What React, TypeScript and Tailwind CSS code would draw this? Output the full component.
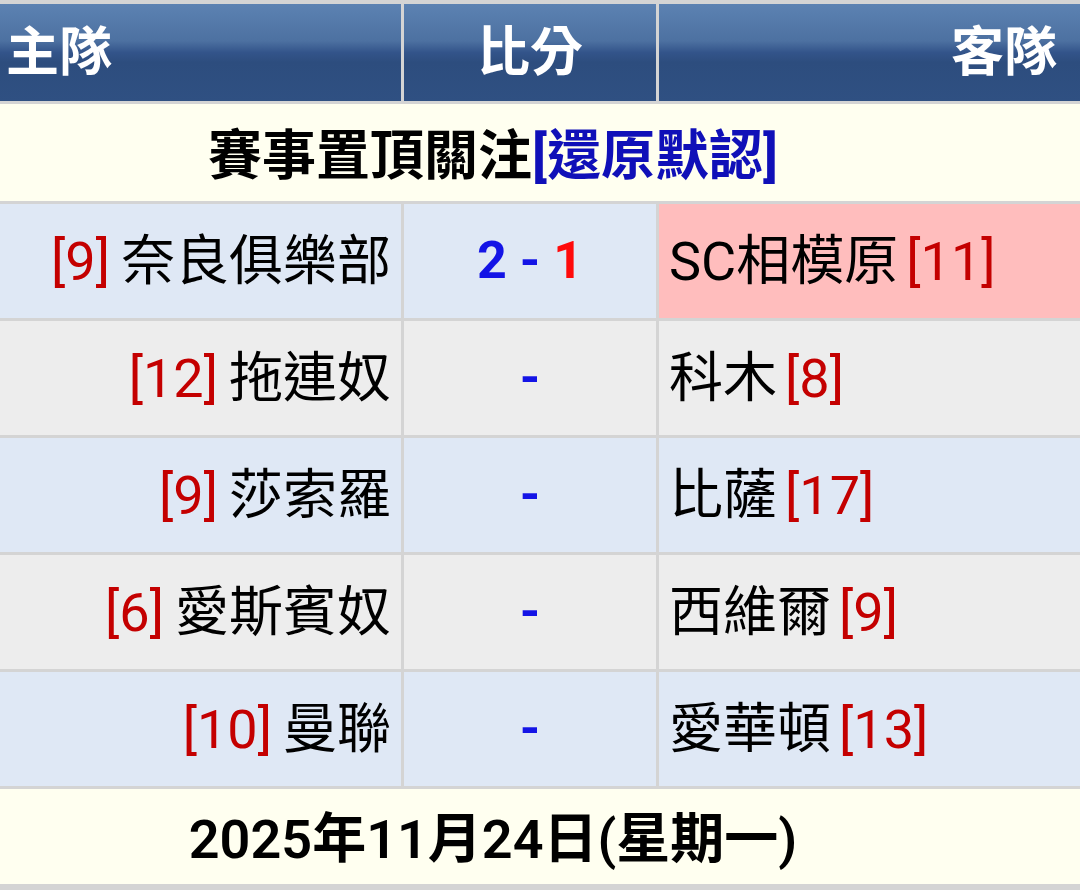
import React from "react";

interface Match {
    home: string;
    homeRank: string;
    away: string;
    awayRank: string;
    homeScore?: string;
    awayScore?: string;
    awayHighlight?: boolean;
}

const matches: Match[] = [
    { home: "奈良俱樂部", homeRank: "9", away: "SC相模原", awayRank: "11", homeScore: "2", awayScore: "1", awayHighlight: true },
    { home: "拖連奴", homeRank: "12", away: "科木", awayRank: "8" },
    { home: "莎索羅", homeRank: "9", away: "比薩", awayRank: "17" },
    { home: "愛斯賓奴", homeRank: "6", away: "西維爾", awayRank: "9" },
    { home: "曼聯", homeRank: "10", away: "愛華頓", awayRank: "13" },
];

const headerBg =
    "bg-[linear-gradient(to_bottom,#5c82b2_0%,#4d71a1_38%,#33548a_50%,#2d4d7e_60%,#2f5082_100%)]";

const App = () => {
    return (
        <div
            className="w-[1080px] h-[890px] bg-[#d4d4d4] pt-[4px]"
            style={{ fontFamily: '"Roboto", "Noto Sans CJK TC", sans-serif' }}
        >
            <div className="grid grid-cols-[401px_252px_421px] gap-[3px]">
                {/* header */}
                <div className={`${headerBg} h-[97px] flex items-center pl-[6px] pt-[2px] text-white font-bold text-[53px] leading-none`}>
                    主隊
                </div>
                <div className={`${headerBg} h-[97px] flex items-center justify-center pt-[2px] text-white font-bold text-[53px] leading-none`}>
                    比分
                </div>
                <div className={`${headerBg} h-[97px] flex items-center justify-end pr-[23px] pt-[2px] text-white font-bold text-[53px] leading-none`}>
                    客隊
                </div>

                {/* pinned */}
                <div className="col-span-3 h-[97px] bg-[#fffff0] flex items-center justify-center pr-[94px] pt-[8px] font-bold text-[54px] leading-none text-black">
                    賽事置頂關注<span className="text-[#1010b8]">[還原默認]</span>
                </div>

                {matches.map((m, i) => {
                    const rowBg = i % 2 === 0 ? "bg-[#dfe8f5]" : "bg-[#ededed]";
                    return (
                        <React.Fragment key={i}>
                            <div className={`${rowBg} h-[114px] flex items-center justify-end pr-[10px] pt-[2px] text-[54px] leading-none text-black`}>
                                <span className="text-[#c40000]">[{m.homeRank}]</span>
                                <span className="ml-[11px]">{m.home}</span>
                            </div>
                            <div className={`${rowBg} h-[114px] flex items-center justify-center font-bold text-[52px] leading-none text-[#1414e6] whitespace-pre`}>
                                {m.homeScore ? (
                                    <>
                                        <span>{m.homeScore} - </span>
                                        <span className="text-[#ff0a0a]">{m.awayScore}</span>
                                    </>
                                ) : (
                                    <span>-</span>
                                )}
                            </div>
                            <div
                                className={`${m.awayHighlight ? "bg-[#ffbdbd]" : rowBg} h-[114px] flex items-center pl-[10px] pt-[2px] text-[54px] leading-none text-black`}
                            >
                                <span>{m.away}</span>
                                <span className="ml-[8px] text-[#c40000]">[{m.awayRank}]</span>
                            </div>
                        </React.Fragment>
                    );
                })}

                {/* date */}
                <div className="col-span-3 h-[95px] bg-[#fffff0] flex items-center justify-center pr-[94px] pt-[6px] font-semibold text-[54px] leading-none text-black">
                    2025年11月24日(星期一)
                </div>
            </div>
        </div>
    );
};

export default App;
